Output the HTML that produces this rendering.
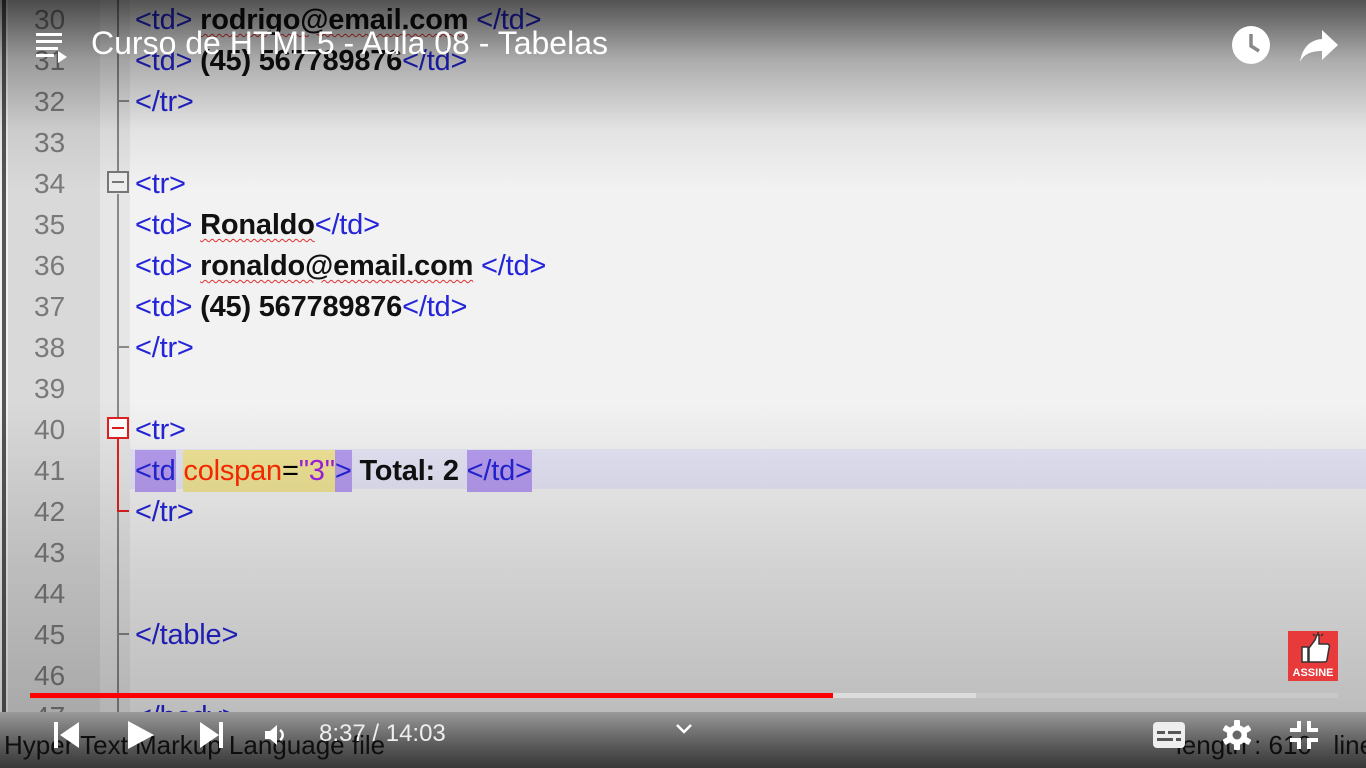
<!DOCTYPE html>
<html><head><meta charset="utf-8"><style>
*{margin:0;padding:0;box-sizing:border-box}
html,body{width:1366px;height:768px;overflow:hidden}
body{position:relative;background:#f2f2f2;font-family:"Liberation Sans",Arial,sans-serif}
.gut{position:absolute;left:8px;top:0;width:92px;height:712px;background:#d9d9d9}
.gut2{position:absolute;left:100px;top:0;width:30px;height:712px;background:#e6e6e6}
.edge{position:absolute;left:2px;top:0;width:4px;height:712px;background:#555}
.ln{position:absolute;left:34px;font-size:28px;color:#7a7a7a;line-height:30px}
.c{position:absolute;left:135px;font-size:29px;line-height:30px;white-space:pre;color:#000;letter-spacing:-0.2px}
.t{color:#2424d8}
.b{font-weight:bold;color:#111}
.u{text-decoration:underline wavy #e03030;text-decoration-thickness:1px;text-underline-offset:4px}
.fold{position:absolute;left:117px;width:2px;background:#888}
.box{position:absolute;left:107px;width:22px;height:22px;border:2px solid #777;background:#eee}
.box:after{content:"";position:absolute;left:3px;right:3px;top:8px;height:2px;background:#777}
.box.r{border-color:#e02020;background:#fff}
.box.r:after{background:#e02020}
.tick{position:absolute;left:117px;width:12px;height:2px;background:#888}
.hl{position:absolute;left:130px;top:449px;width:1236px;height:40px;background:#e4e4f6}
.pu{background:#b69cf0}
.ye{background:#f0e496}
.shade{position:absolute;left:0;top:0;width:1366px;height:712px;background:linear-gradient(#000000a8 0px,#0000004a 60px,#00000010 130px,#0000 190px,#0000 400px,#00000020 560px,#00000038 712px)}
.status{position:absolute;left:0;top:712px;width:1366px;height:56px;background:linear-gradient(#9a9a9a,#6a6a6a 60%,#4a4a4a)}
.title{position:absolute;left:91px;top:25px;font-size:32px;color:#fff;letter-spacing:0px;white-space:nowrap}
.bar{position:absolute;top:693px;height:5px}
.w{fill:#fff}
</style></head><body>
<div class="gut"></div><div class="gut2"></div><div class="edge"></div>
<div class="hl"></div>
<div class="ln" style="top:5px">30</div>
<div class="ln" style="top:46px">31</div>
<div class="ln" style="top:87px">32</div>
<div class="ln" style="top:128px">33</div>
<div class="ln" style="top:169px">34</div>
<div class="ln" style="top:210px">35</div>
<div class="ln" style="top:251px">36</div>
<div class="ln" style="top:292px">37</div>
<div class="ln" style="top:333px">38</div>
<div class="ln" style="top:374px">39</div>
<div class="ln" style="top:415px">40</div>
<div class="ln" style="top:456px">41</div>
<div class="ln" style="top:497px">42</div>
<div class="ln" style="top:538px">43</div>
<div class="ln" style="top:579px">44</div>
<div class="ln" style="top:620px">45</div>
<div class="ln" style="top:661px">46</div>
<div class="ln" style="top:702px">47</div>
<div class="fold" style="top:0;height:172px"></div>
<div class="fold" style="top:194px;height:518px"></div>
<div class="tick" style="top:100px"></div>
<div class="tick" style="top:346px"></div>
<div class="tick" style="top:633px"></div>
<div class="box" style="top:171px"></div>
<div class="fold" style="top:438px;height:73px;background:#e02020"></div>
<div class="tick" style="top:510px;background:#e02020"></div>
<div class="box r" style="top:417px"></div>
<div class="c" style="top:5px"><span class="t">&lt;td&gt;</span> <span class="b u">rodrigo@email.com</span> <span class="t">&lt;/td&gt;</span></div>
<div class="c" style="top:46px"><span class="t">&lt;td&gt;</span> <span class="b">(45) 567789876</span><span class="t">&lt;/td&gt;</span></div>
<div class="c" style="top:87px"><span class="t">&lt;/tr&gt;</span></div>
<div class="c" style="top:169px"><span class="t">&lt;tr&gt;</span></div>
<div class="c" style="top:210px"><span class="t">&lt;td&gt;</span> <span class="b u">Ronaldo</span><span class="t">&lt;/td&gt;</span></div>
<div class="c" style="top:251px"><span class="t">&lt;td&gt;</span> <span class="b u">ronaldo@email.com</span> <span class="t">&lt;/td&gt;</span></div>
<div class="c" style="top:292px"><span class="t">&lt;td&gt;</span> <span class="b">(45) 567789876</span><span class="t">&lt;/td&gt;</span></div>
<div class="c" style="top:333px"><span class="t">&lt;/tr&gt;</span></div>
<div class="c" style="top:415px"><span class="t">&lt;tr&gt;</span></div>
<div class="c" style="top:456px"><span class="t pu" style="padding:5px 0">&lt;td</span> <span class="ye" style="padding:5px 0"><span style="color:#ff2a00">colspan</span>=<span style="color:#a020e0">"3"</span></span><span class="t pu" style="padding:5px 0">&gt;</span> <span class="b">Total: 2</span> <span class="t pu" style="padding:5px 0">&lt;/td&gt;</span></div>
<div class="c" style="top:497px"><span class="t">&lt;/tr&gt;</span></div>
<div class="c" style="top:620px"><span class="t">&lt;/table&gt;</span></div>
<div class="c" style="top:702px"><span class="t">&lt;/body&gt;</span></div>
<div class="shade"></div>
<div class="status"></div>
<div style="position:absolute;left:4px;top:730px;font-size:26px;color:#111;white-space:nowrap">Hyper Text Markup Language file</div>
<div style="position:absolute;left:1176px;top:730px;font-size:26px;color:#111;white-space:nowrap">length : 610&nbsp;&nbsp;&nbsp;lines</div>
<div style="position:absolute;left:0;top:712px;width:1366px;height:56px;background:linear-gradient(#0000,#00000040)"></div>
<div class="bar" style="left:30px;width:1308px;background:#c8c8c8"></div>
<div class="bar" style="left:30px;width:946px;background:#dcdcdc"></div>
<div class="bar" style="left:30px;width:803px;background:#f00"></div>
<div class="title">Curso de HTML5 - Aula 08 - Tabelas</div>
<svg style="position:absolute;left:34px;top:30px" width="36" height="36" viewBox="0 0 36 36"><rect class="w" x="2" y="3" width="26" height="3"/><rect class="w" x="2" y="10" width="26" height="3"/><rect class="w" x="2" y="17" width="22" height="3"/><rect class="w" x="2" y="24" width="18" height="3"/><path class="w" d="M24 21l9 6-9 6z"/></svg>
<svg style="position:absolute;left:1230px;top:24px" width="42" height="42" viewBox="0 0 42 42"><circle cx="21" cy="21" r="19" fill="#fff"/><path d="M21 10v12l8 5" stroke="#888" stroke-width="3.5" fill="none"/></svg>
<svg style="position:absolute;left:1298px;top:28px" width="42" height="36" viewBox="0 0 42 36"><path class="w" d="M24 2l16 15-16 15v-9C13 23 6 26 2 34 4 22 10 12 24 11z"/></svg>
<div style="position:absolute;left:1288px;top:631px;width:50px;height:50px;background:#e8393b;color:#fff;font-size:11px;font-weight:bold;text-align:center">
<svg width="50" height="36" viewBox="0 0 50 36"><path d="M14 16h6v15h-6z M21 17l6-8 2-5h2v9h8c2 0 3 2 2 4l-2 12c0 1-1 2-3 2H21z" fill="#fff" stroke="#333" stroke-width="1.5"/><path d="M30 1v3M25 3l2 2M35 3l-2 2" stroke="#333" stroke-width="1.5"/></svg>
<div style="margin-top:-3px">ASSINE</div></div>
<svg style="position:absolute;left:52px;top:719px" width="30" height="32" viewBox="0 0 30 32"><rect class="w" x="2" y="3" width="4" height="26"/><path class="w" d="M27 3v26L8 16z"/></svg>
<svg style="position:absolute;left:126px;top:719px" width="30" height="32" viewBox="0 0 30 32"><path class="w" d="M2 2v28l26-14z"/></svg>
<svg style="position:absolute;left:197px;top:719px" width="30" height="32" viewBox="0 0 30 32"><path class="w" d="M3 3v26l19-13z"/><rect class="w" x="22" y="3" width="4" height="26"/></svg>
<svg style="position:absolute;left:262px;top:722px" width="26" height="26" viewBox="0 0 26 26"><path class="w" d="M3 9h5l7-6v20l-7-6H3z"/><path d="M18 8a6 6 0 010 10" stroke="#fff" stroke-width="2.5" fill="none"/></svg>
<div style="position:absolute;left:319px;top:720px;font-size:24px;color:#eee">8:37 / 14:03</div>
<svg style="position:absolute;left:674px;top:722px" width="20" height="14" viewBox="0 0 20 14"><path d="M3 3l7 7 7-7" stroke="#fff" stroke-width="2.5" fill="none"/></svg>
<svg style="position:absolute;left:1152px;top:721px" width="34" height="28" viewBox="0 0 34 28"><rect x="1" y="1" width="32" height="26" rx="4" fill="#eee"/><rect x="5" y="10" width="8" height="3" fill="#555"/><rect x="16" y="10" width="13" height="3" fill="#555"/><rect x="5" y="17" width="16" height="3" fill="#555"/><rect x="24" y="17" width="5" height="3" fill="#555"/></svg>
<svg style="position:absolute;left:1221px;top:719px" width="32" height="32" viewBox="0 0 32 32"><g fill="#fff"><circle cx="16" cy="16" r="10"/><rect x="13" y="1" width="6" height="30" rx="1"/><rect x="13" y="1" width="6" height="30" rx="1" transform="rotate(60 16 16)"/><rect x="13" y="1" width="6" height="30" rx="1" transform="rotate(120 16 16)"/></g><circle cx="16" cy="16" r="4.5" fill="#666"/></svg>
<svg style="position:absolute;left:1288px;top:719px" width="32" height="32" viewBox="0 0 32 32"><path d="M11 2v9H2M21 2v9h9M11 30v-9H2M21 30v-9h9" stroke="#fff" stroke-width="4" fill="none"/></svg>
</body></html>
